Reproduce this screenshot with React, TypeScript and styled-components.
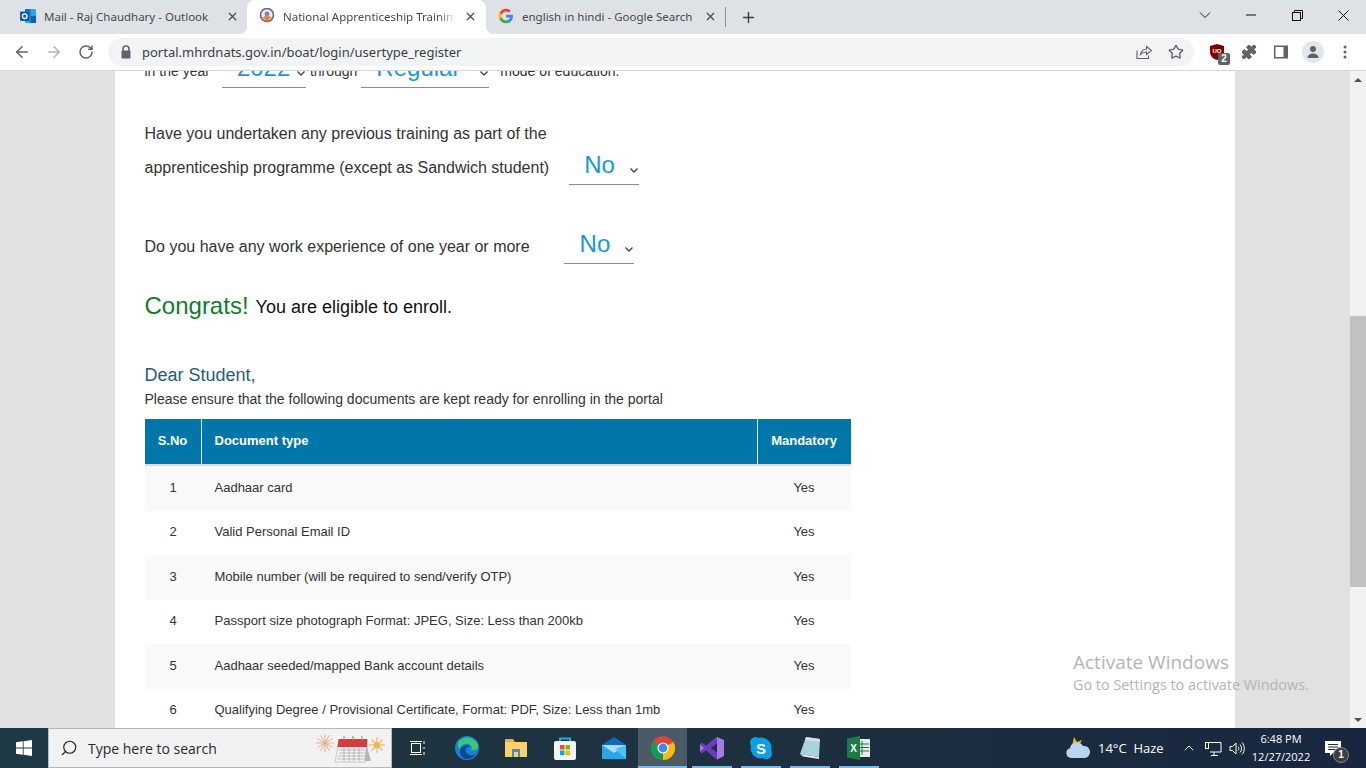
import React from "react";
import styled, { createGlobalStyle } from "styled-components";
import { ArrowLeft, ArrowRight, RotateCw, Star, Puzzle, X, Plus, ChevronDown, Search, ChevronUp } from "lucide-react";

const Global = createGlobalStyle`
  html, body { margin: 0; padding: 0; overflow: hidden; }
  * { box-sizing: border-box; }
  body { font-family: "Liberation Sans", Arial, sans-serif; }
`;
const Page = styled.div`width:1366px;height:768px;display:flex;flex-direction:column;overflow:hidden;position:relative;`;
const TabBar = styled.div`height:34px;background:#dee1e6;display:flex;align-items:flex-end;padding-left:8px;font-family:"Noto Sans","Open Sans",sans-serif;`;
const Tab = styled.div<{ $active?: boolean; $w: number; $pr: number }>`
  width:${p => p.$w}px;height:34px;display:flex;align-items:center;padding:0 ${p => p.$pr}px 2px 12px;gap:8px;font-size:11.5px;color:#3c4043;position:relative;
  background:${p => p.$active ? "#fff" : "transparent"};border-radius:8px 8px 0 0;
  ${p => p.$active ? `
    &::before,&::after{content:"";position:absolute;bottom:0;width:8px;height:8px;}
    &::before{left:-8px;background:radial-gradient(circle at 0 0,transparent 8px,#fff 8.5px);}
    &::after{right:-8px;background:radial-gradient(circle at 100% 0,transparent 8px,#fff 8.5px);}
  ` : ""}
`;
const TabTitle = styled.span<{ $fade?: boolean }>`
  flex:1;white-space:nowrap;overflow:hidden;color:#45494d;
  ${p => p.$fade ? "mask-image:linear-gradient(90deg,#000 90%,transparent 100%);" : ""}
`;
const TabClose = styled(X).attrs({ size: 13, strokeWidth: 2.2, color: "#45494d" })`flex:none;`;
const Sep = styled.div`width:1px;height:20px;background:#8b8e92;margin-bottom:7px;align-self:flex-end;`;
const NewTab = styled(Plus).attrs({ size: 17, strokeWidth: 2, color: "#3c4043" })`margin:0 0 8px 14px;`;
const WinControls = styled.div`margin-left:auto;display:flex;align-items:center;height:30px;align-self:flex-start;color:#222;`;
const WinBtn = styled.div`width:46px;height:30px;display:flex;align-items:center;justify-content:center;`;
const Toolbar = styled.div`height:37px;background:#fff;display:flex;align-items:center;padding:0 0 0 6px;border-bottom:1px solid #d6d6d6;`;
const NavBtn = styled.div`width:32px;height:28px;display:flex;align-items:center;justify-content:center;color:#5f6368;`;
const Omni = styled.div`margin-left:6px;width:1086px;height:28px;border-radius:14px;background:#f1f3f4;display:flex;align-items:center;padding:0 10px 0 12px;`;
const Url = styled.span`margin-left:10px;font:13px "Noto Sans","Open Sans",sans-serif;color:#3c4043;flex:1;`;
const ShareBox = styled.span`display:flex;margin-right:16px;`;
const ExtRow = styled.div`display:flex;align-items:center;margin-left:7px;color:#5f6368;`;
const ExtBtn = styled.div`width:32px;height:28px;display:flex;align-items:center;justify-content:center;position:relative;`;
const Avatar = styled.div`width:22px;height:22px;border-radius:50%;background:#e3e6ea;display:flex;align-items:center;justify-content:center;`;
const Badge = styled.span`position:absolute;right:3px;bottom:1px;width:12px;height:12px;background:#5f6368;border-radius:2px;color:#fff;font:bold 10px/12px "Liberation Sans",sans-serif;text-align:center;`;
const Viewport = styled.div`height:657px;background:#e1e1e1;display:flex;position:relative;overflow:hidden;`;
const PageArea = styled.div`width:1350px;padding-left:115px;overflow:hidden;`;
const Sheet = styled.div`width:1120px;height:657px;background:#fff;padding:0 0 0 29.5px;overflow:hidden;`;
const Scrollbar = styled.div`width:16px;background:#f1f1f1;display:flex;flex-direction:column;align-items:center;position:relative;`;
const ScrollArrow = styled.div<{ $down?: boolean }>`
  height:17px;width:16px;display:flex;align-items:center;justify-content:center;
  &::before{content:"";border-left:4px solid transparent;border-right:4px solid transparent;${p => p.$down ? "border-top:4px solid #505050;" : "border-bottom:4px solid #505050;"}}
`;
const ScrollTrack = styled.div`flex:1;width:16px;padding-top:228px;`;
const ScrollThumb = styled.div`height:271px;background:#c1c1c1;`;
const ClipRow = styled.div`display:flex;align-items:flex-end;color:#333;margin-top:-22px;height:39px;font-size:14px;`;
const Fade = styled.span<{ $ml?: number }>`margin-left:${p => p.$ml ?? 0}px;margin-bottom:9px;white-space:nowrap;`;
const Select = styled.div<{ $w: number; $ml: number; $pl: number; $lift?: number }>`
  flex:none;width:${p => p.$w}px;margin-left:${p => p.$ml}px;margin-bottom:${p => p.$lift ?? 0}px;height:39px;border-bottom:1px solid #8c8c8c;display:flex;align-items:center;position:relative;
  padding-left:${p => p.$pl}px;color:#1798d6;font-size:24px;white-space:nowrap;
`;
const Caret = styled.svg`position:absolute;right:0;bottom:9px;width:10px;height:10px;fill:none;stroke:#444;stroke-width:1.4;`;
const Question = styled.div<{ $mt: number }>`margin-top:${p => p.$mt}px;font-size:16px;line-height:34px;color:#333;`;
const QLine = styled.div`display:flex;height:34px;align-items:center;white-space:nowrap;`;
const Congrats = styled.div`margin-top:22px;height:40px;display:flex;align-items:center;gap:7px;white-space:nowrap;`;
const CongratsHead = styled.span`color:#107c2c;font-size:24px;`;
const CongratsText = styled.span`color:#111;font-size:18px;margin-top:3px;`;
const Dear = styled.div`margin-top:38px;font-size:18px;color:#1f5d75;height:22px;line-height:22px;`;
const Ensure = styled.div`margin-top:4px;font-size:14px;color:#333;height:19px;line-height:19px;`;
const TableBox = styled.div`margin-top:10px;width:706px;`;
const Grid = styled.div`display:grid;grid-template-columns:57px 556px 93px;`;
const HeadCell = styled.div<{ $c?: boolean; $b?: boolean }>`
  height:45px;padding-bottom:2px;background:#0077a8;color:#fff;font-weight:bold;font-size:13px;display:flex;align-items:center;
  justify-content:${p => p.$c ? "center" : "flex-start"};padding-left:${p => p.$c ? 0 : 13}px;
  border-right:${p => p.$b ? "1px solid #e8f2f6" : "none"};
`;
const HeadRule = styled.div`grid-column:1 / 4;height:2px;background:#ddd;`;
const Cell = styled.div<{ $alt: boolean; $c?: boolean }>`
  height:44.5px;padding-bottom:2px;background:${p => p.$alt ? "#f9f9f9" : "#fff"};color:#333;font-size:13px;display:flex;align-items:center;
  justify-content:${p => p.$c ? "center" : "flex-start"};padding-left:${p => p.$c ? 0 : 13}px;white-space:nowrap;
`;
const Taskbar = styled.div`height:40px;background:linear-gradient(90deg,#1f3a44 0%,#1e3240 45%,#18273f 100%);display:flex;align-items:center;color:#fff;position:relative;`;
const StartBtn = styled.div`width:48px;height:40px;display:flex;align-items:center;justify-content:center;`;
const SearchBox = styled.div`width:344px;height:40px;background:#f2f2f2;border:1px solid #b9b9b9;display:flex;align-items:center;padding-left:11px;color:#222;`;
const SearchGlyph = styled(Search).attrs({ size: 18, strokeWidth: 1.5 })`transform:scaleX(-1);`;
const SearchText = styled.span`margin-left:10px;font:14px "Open Sans","Noto Sans",sans-serif;color:#1f2a33;`;
const SearchArt = styled.div`margin-left:auto;margin-right:4px;display:flex;`;
const Apps = styled.div`display:flex;height:40px;margin-left:1px;`;
const AppBtn = styled.div<{ $active?: boolean; $open?: boolean }>`
  width:49px;height:40px;display:flex;align-items:center;justify-content:center;position:relative;
  background:${p => p.$active ? "#4a5a66" : "transparent"};
  &::after{content:"";display:${p => p.$open ? "block" : "none"};position:absolute;left:${p => p.$active ? 0 : 4.5}px;right:${p => p.$active ? 0 : 4.5}px;bottom:0;height:2px;background:#76b9ed;}
`;
const Tray = styled.div`margin-left:auto;padding-right:13px;display:flex;align-items:center;height:40px;font:13px "Open Sans","Noto Sans",sans-serif;color:#fff;`;
const Weather = styled.div`display:flex;align-items:center;width:108px;gap:7px;white-space:nowrap;`;
const TrayChevron = styled(ChevronUp).attrs({ size: 16, strokeWidth: 1.5 })`margin:0 8px;`;
const TrayGap = styled.span`width:7px;`;
const Clock = styled.div`width:62px;margin-left:4px;text-align:center;font-size:11px;line-height:18px;white-space:nowrap;`;
const Notif = styled.div`width:40px;height:40px;margin-left:1px;display:flex;align-items:center;justify-content:center;position:relative;`;
const NotifBadge = styled.span`position:absolute;left:20px;top:19px;width:16px;height:16px;border-radius:50%;background:#3a3f45;border:1px solid #888;color:#fff;font:bold 10px/14px "Liberation Sans",sans-serif;text-align:center;`;
const Watermark = styled.div`position:absolute;left:1073px;top:650px;color:#b4b4b4;font-family:"Open Sans","Noto Sans",sans-serif;pointer-events:none;`;
const WmTitle = styled.div`font-size:19px;line-height:24px;white-space:nowrap;`;
const WmSub = styled.div`font-size:14.4px;line-height:20px;margin-top:1px;white-space:nowrap;`;

const OutlookIcon = () => (
  <svg width="16" height="16" viewBox="0 0 16 16"><rect x="5" y="1" width="11" height="14" rx="1" fill="#28a8ea"/><rect x="5" y="1" width="5.5" height="7" fill="#0078d4"/><rect x="10.5" y="8" width="5.5" height="7" fill="#0364b8"/><rect x="0" y="3.5" width="9.5" height="9.5" rx="1" fill="#0f5ca8"/><circle cx="4.7" cy="8.2" r="2.3" fill="none" stroke="#fff" strokeWidth="1.3"/></svg>
);
const NatsIcon = () => (
  <svg width="16" height="16" viewBox="0 0 16 16"><circle cx="8" cy="7" r="6.5" fill="#eceaf2" stroke="#6b6390" strokeWidth="1.6"/><circle cx="8" cy="6" r="2.4" fill="#8b7f9c"/><path d="M3 9.5 L8 7.5 L13 9.5 L8 12 Z" fill="#e8803a"/><path d="M5.5 11.5 h5 v2.5 h-5z" fill="#d9662a"/></svg>
);
const GoogleIcon = () => (
  <svg width="16" height="16" viewBox="0 0 48 48"><path fill="#4285F4" d="M45 24.5c0-1.6-.1-3.1-.4-4.5H24v8.5h11.8c-.5 2.7-2 5-4.4 6.6v5.5h7.1C42.700 36.800 45 31.200 45 24.500z"/><path fill="#34A853" d="M24 46c5.900 0 10.900-2 14.500-5.300l-7.100-5.500c-2 1.300-4.500 2.100-7.400 2.100-5.700 0-10.500-3.800-12.200-9H4.500v5.700C8.100 41.100 15.500 46 24 46z"/><path fill="#FBBC05" d="M11.800 28.300c-.4-1.300-.7-2.800-.7-4.300s.3-3 .7-4.300V14H4.500C3 17 2 20.400 2 24s1 7 2.500 10l7.300-5.700z"/><path fill="#EA4335" d="M24 10.700c3.200 0 6.100 1.100 8.400 3.300l6.300-6.300C34.900 4.100 29.900 2 24 2 15.500 2 8.100 6.900 4.500 14l7.300 5.700c1.700-5.200 6.500-9 12.200-9z"/></svg>
);
const Chrome = ({ s = 24 }: { s?: number }) => (
  <svg width={s} height={s} viewBox="0 0 24 24"><circle cx="12" cy="12" r="12" fill="#db4437"/><path d="M12 12 L22.400 6 A12 12 0 0 1 12 24 Z" fill="#fbbc05"/><path d="M12 12 L12 24 A12 12 0 0 1 1.600 6 Z" fill="#0f9d58"/><circle cx="12" cy="12" r="5.600" fill="#fff"/><circle cx="12" cy="12" r="4.400" fill="#4285f4"/></svg>
);
const LockIcon = () => (
  <svg width="12" height="14" viewBox="0 0 12 14"><path d="M3 6V4a3 3 0 0 1 6 0v2" fill="none" stroke="#5f6368" strokeWidth="1.5"/><rect x="1.500" y="5.500" width="9" height="8" rx="1" fill="#5f6368"/></svg>
);
const ShareIcon = () => (
  <svg width="16" height="16" viewBox="0 0 16 16" fill="none" stroke="#5f6368" strokeWidth="1.1"><path d="M1 6.500V14.500H12.500V11.500"/><path d="M4.500 10.500C5 7 8 5 10.500 5V2.500L15.500 6.500 10.500 10.500V8C8 8 6 8.800 4.500 10.500Z"/></svg>
);
const UBlock = () => (
  <svg width="16" height="18" viewBox="0 0 16 18"><path d="M8 1 L15 3 V9 C15 13 12 16 8 17 C4 16 1 13 1 9 V3 Z" fill="#800000"/><text x="8" y="9.5" fontSize="6" fontWeight="bold" fill="#fff" textAnchor="middle" fontFamily="Liberation Sans">UO</text></svg>
);
const SidePanelIcon = () => (
  <svg width="16" height="16" viewBox="0 0 16 16"><path fill="#5f6368" d="M1 1.500h14v13H1z"/><path fill="#fff" d="M2.500 3H10.500v10H2.500z"/></svg>
);
const ProfileIcon = () => (
  <svg width="16" height="16" viewBox="0 0 16 16" fill="#5f6368"><circle cx="8" cy="5" r="3"/><path d="M2.500 14c0-3 2.500-4.500 5.500-4.500s5.500 1.500 5.500 4.500z"/></svg>
);
const Dots = () => (
  <svg width="16" height="16" viewBox="0 0 16 16" fill="#5f6368"><circle cx="8" cy="3" r="1.500"/><circle cx="8" cy="8" r="1.500"/><circle cx="8" cy="13" r="1.500"/></svg>
);
const ChevronWin = () => (
  <svg width="12" height="8" viewBox="0 0 12 8" fill="none" stroke="#222"><path d="M1 1.500 6 6.500 11 1.500"/></svg>
);
const MinIcon = () => (
  <svg width="10" height="2" viewBox="0 0 10 2"><rect y="0.500" width="10" height="1" fill="#111"/></svg>
);
const RestoreIcon = () => (
  <svg width="11" height="11" viewBox="0 0 11 11" fill="none" stroke="#111"><rect x="0.500" y="2.500" width="8" height="8"/><path d="M2.500 2.500V0.500H10.500V8.500H8.500"/></svg>
);
const CloseWin = () => (
  <svg width="11" height="11" viewBox="0 0 11 11" fill="none" stroke="#111"><path d="M0.500 0.500 10.500 10.500M10.500 0.500 0.500 10.500"/></svg>
);
const WinLogo = () => (
  <svg width="16" height="16" viewBox="0 0 16 16" fill="#fff"><path d="M0 2.300 6.800 1.300V7.600H0zM7.600 1.200 16 0V7.600H7.600zM0 8.400H6.800V14.700L0 13.700zM7.600 8.400H16V16L7.600 14.800z"/></svg>
);
const CalendarArt = () => (
  <svg width="72" height="30" viewBox="0 0 72 30">
    <g stroke="#f0a080" strokeWidth="0.800">{[0,30,60,90,120,150].map(a => <line key={a} x1="10" y1="1" x2="10" y2="19" transform={`rotate(${a} 10 10)`}/>)}</g>
    <g stroke="#f4a93a" strokeWidth="1">{[0,45,90,135].map(a => <line key={a} x1="62" y1="4" x2="62" y2="20" transform={`rotate(${a} 62 12)`}/>)}</g>
    <circle cx="62" cy="12" r="3" fill="#f6b73c"/>
    <path d="M50 6 L56 28 H46 Z" fill="#b4b4c0"/>
    <path d="M24 8H52L50 29H20Z" fill="#f4f4f4" stroke="#999" strokeWidth="0.500"/>
    <path d="M23.500 6H52.500L51.800 14H22.500Z" fill="#d83b3b"/>
    <g stroke="#888" strokeWidth="1" fill="none"><path d="M29 8V3"/><path d="M38 8V3"/><path d="M47 8V3"/></g>
    <g stroke="#999" strokeWidth="0.600"><path d="M24 17H50M24 20H50M23 23H50M22 26H50M29 15V28M34 15V28M39 15V28M44 15V28"/></g>
  </svg>
);
const TaskView = () => (
  <svg width="16" height="16" viewBox="0 0 16 16" fill="none" stroke="#fff"><rect x="1.500" y="3.500" width="9" height="9"/><path d="M0 1.500H12M0 14.500H12M14 1v3M14 7v2M14 12v3"/></svg>
);
const EdgeIcon = () => (
  <svg width="24" height="24" viewBox="0 0 24 24"><circle cx="12" cy="12" r="12" fill="#1b7fd6"/><path d="M3 7C6 0 19 -1 23 9c1 4-3 6-7 5 2-4-2-7-6-6-3 .8-5 3-5.500 5C3.500 12 2.500 9 3 7z" fill="#37c87a"/><path d="M5 16c0-6 7-9 11-5-3-1-6 1-5.500 4 .5 4 6 5 10 3-3 5-9 6-12 4-2-1.500-3.500-3.500-3.500-6z" fill="#0c4a8f"/></svg>
);
const FolderIcon = () => (
  <svg width="22" height="20" viewBox="0 0 22 20"><path d="M0 1h8l2 3h12v15H0z" fill="#e8b23c"/><rect y="4" width="22" height="15" fill="#f9d26b"/><rect x="7" y="11" width="8" height="8" fill="#3f8fd8"/><rect x="9" y="14" width="4" height="5" fill="#f9d26b"/></svg>
);
const StoreIcon = () => (
  <svg width="24" height="24" viewBox="0 0 24 24"><path d="M7 5V2.500h10V5" fill="none" stroke="#29a8e0" strokeWidth="2"/><rect x="1" y="5" width="22" height="19" rx="2" fill="#f4f4f4"/><rect x="7" y="9" width="4.500" height="4.500" fill="#f25022"/><rect x="12.500" y="9" width="4.500" height="4.500" fill="#7fba00"/><rect x="7" y="14.500" width="4.500" height="4.500" fill="#00a4ef"/><rect x="12.500" y="14.500" width="4.500" height="4.500" fill="#ffb900"/></svg>
);
const MailIcon = () => (
  <svg width="24" height="24" viewBox="0 0 24 24"><path d="M0 9 12 1l12 8v14H0z" fill="#0f6cbd"/><path d="M0 9h24v14H0z" fill="#27a6e8"/><path d="M0 9l12 8 12-8v0H0z" fill="#a6e2fa"/><path d="M24 23 13 13l11-4z" fill="#4cc2f1"/></svg>
);
const VSIcon = () => (
  <svg width="24" height="24" viewBox="0 0 24 24"><path d="M17 1 24 4v16l-7 3.500L6 14l-4 3-2-1.500v-7L2 7l4 3z" fill="#a57de0"/><path d="M17 1v22.500L6 14l-4 3-2-1.500L4 12 0 8.500 2 7l4 3z" fill="#6b3bbf"/><path d="M17 7.500 11 12l6 4.500z" fill="#1c2f3f"/></svg>
);
const SkypeIcon = () => (
  <svg width="24" height="24" viewBox="0 0 24 24"><circle cx="12" cy="12" r="10.500" fill="#0aa0e6"/><circle cx="6.500" cy="6.500" r="5.500" fill="#0aa0e6"/><circle cx="17.500" cy="17.500" r="5.500" fill="#0aa0e6"/><text x="12" y="17.500" fontSize="15" fontWeight="bold" fill="#fff" textAnchor="middle" fontFamily="Liberation Sans">S</text></svg>
);
const NotepadIcon = () => (
  <svg width="24" height="24" viewBox="0 0 24 24"><path d="M8 1 22 3 21 21 2 18z" fill="#a9d3da"/><path d="M21 21 2 18l3 2.500 16 2.500z" fill="#e8e8e8"/><path d="M8 1 22 3 21.500 6 7 4z" fill="#dcdcdc"/></svg>
);
const ExcelIcon = () => (
  <svg width="24" height="24" viewBox="0 0 24 24"><rect x="8" y="3" width="15" height="18" fill="#fff" opacity=".9"/><path d="M15 5v14M9 8h13M9 11.500h13M9 15h13" stroke="#1c7a45" strokeWidth="1"/><path d="M0 2.500 13 0v24L0 21.500z" fill="#1c7a45"/><text x="6.500" y="16" fontSize="10" fontWeight="bold" fill="#fff" textAnchor="middle" fontFamily="Liberation Sans">X</text></svg>
);
const WeatherIcon = () => (
  <svg width="26" height="24" viewBox="0 0 26 24"><path d="M7 10 9 1 12 6 17 4 14 10z" fill="#f2b133"/><path d="M6 22a5 5 0 0 1-1-9.800A7 7 0 0 1 18 10a5.500 5.500 0 0 1 2 12z" fill="#b9d4ef"/></svg>
);
const NetworkIcon = () => (
  <svg width="17" height="15" viewBox="0 0 17 15" fill="none" stroke="#fff"><path d="M3.500 1.500H16V11H5M9 11v3M6 14.500h7"/><rect x="0.500" y="1.500" width="3" height="6"/></svg>
);
const SpeakerIcon = () => (
  <svg width="17" height="15" viewBox="0 0 17 15" fill="none" stroke="#fff"><path d="M1 5.500H3.500L7 2V13L3.500 9.500H1z"/><path d="M9 5.500c1 1 1 3 0 4M11 3.500c2 2 2 6 0 8M13 1.500c3 3 3 9 0 12"/></svg>
);
const BubbleIcon = () => (
  <svg width="16" height="15" viewBox="0 0 16 15"><path d="M0 0H16V12H8L5 15V12H0z" fill="#fff"/><path d="M3 3.500H13M3 6H13M3 8.500H10" stroke="#1c2f3f"/></svg>
);
const SmallCaret = () => (
  <Caret viewBox="0 0 10 10"><path d="M1.500 3.500 5 7 8.500 3.500" /></Caret>
);

const docs = [
  "Aadhaar card",
  "Valid Personal Email ID",
  "Mobile number (will be required to send/verify OTP)",
  "Passport size photograph Format: JPEG, Size: Less than 200kb",
  "Aadhaar seeded/mapped Bank account details",
  "Qualifying Degree / Provisional Certificate, Format: PDF, Size: Less than 1mb",
];

export default function App() {
  return (
    <Page>
      <Global />
      <TabBar>
        <Tab $w={239} $pr={8.5}><OutlookIcon /><TabTitle>Mail - Raj Chaudhary - Outlook</TabTitle><TabClose /></Tab>
        <Tab $w={239} $pr={9} $active><NatsIcon /><TabTitle $fade>National Apprenticeship Training</TabTitle><TabClose /></Tab>
        <Tab $w={239} $pr={8.5}><GoogleIcon /><TabTitle>english in hindi - Google Search</TabTitle><TabClose /></Tab>
        <Sep />
        <NewTab />
        <WinControls>
          <WinBtn><ChevronWin /></WinBtn>
          <WinBtn><MinIcon /></WinBtn>
          <WinBtn><RestoreIcon /></WinBtn>
          <WinBtn><CloseWin /></WinBtn>
        </WinControls>
      </TabBar>
      <Toolbar>
        <NavBtn><ArrowLeft size={18} strokeWidth={2} /></NavBtn>
        <NavBtn><ArrowRight size={18} strokeWidth={2} color="#b0b3b7" /></NavBtn>
        <NavBtn><RotateCw size={16} strokeWidth={2.2} /></NavBtn>
        <Omni>
          <LockIcon />
          <Url>portal.mhrdnats.gov.in/boat/login/usertype_register</Url>
          <ShareBox><ShareIcon /></ShareBox>
          <Star size={16} strokeWidth={2} color="#5f6368" />
        </Omni>
        <ExtRow>
          <ExtBtn><UBlock /><Badge>2</Badge></ExtBtn>
          <ExtBtn><Puzzle size={16} fill="#5f6368" strokeWidth={1.5} /></ExtBtn>
          <ExtBtn><SidePanelIcon /></ExtBtn>
          <ExtBtn><Avatar><ProfileIcon /></Avatar></ExtBtn>
          <ExtBtn><Dots /></ExtBtn>
        </ExtRow>
      </Toolbar>
      <Viewport>
        <PageArea>
          <Sheet>
            <ClipRow>
              <Fade>in the year</Fade>
              <Select $w={84} $ml={12} $pl={15}>2022<SmallCaret /></Select>
              <Fade $ml={4}>through</Fade>
              <Select $w={128} $ml={4} $pl={15}>Regular<SmallCaret /></Select>
              <Fade $ml={11}>mode of education.</Fade>
            </ClipRow>
            <Question $mt={29}>
              <QLine>Have you undertaken any previous training as part of the</QLine>
              <QLine>apprenticeship programme (except as Sandwich student)
                <Select $w={70} $ml={20} $pl={15} $lift={6}>No<SmallCaret /></Select>
              </QLine>
            </Question>
            <Question $mt={45}>
              <QLine>Do you have any work experience of one year or more
                <Select $w={70} $ml={34} $pl={16} $lift={6}>No<SmallCaret /></Select>
              </QLine>
            </Question>
            <Congrats>
              <CongratsHead>Congrats!</CongratsHead>
              <CongratsText>You are eligible to enroll.</CongratsText>
            </Congrats>
            <Dear>Dear Student,</Dear>
            <Ensure>Please ensure that the following documents are kept ready for enrolling in the portal</Ensure>
            <TableBox>
              <Grid>
                <HeadCell $c $b>S.No</HeadCell>
                <HeadCell $b>Document type</HeadCell>
                <HeadCell $c>Mandatory</HeadCell>
                <HeadRule />
                {docs.map((d, i) => (
                  <React.Fragment key={d}>
                    <Cell $alt={i % 2 === 0} $c>{i + 1}</Cell>
                    <Cell $alt={i % 2 === 0}>{d}</Cell>
                    <Cell $alt={i % 2 === 0} $c>Yes</Cell>
                  </React.Fragment>
                ))}
              </Grid>
            </TableBox>
          </Sheet>
        </PageArea>
        <Scrollbar>
          <ScrollArrow />
          <ScrollTrack><ScrollThumb /></ScrollTrack>
          <ScrollArrow $down />
        </Scrollbar>
      </Viewport>
      <Taskbar>
        <StartBtn><WinLogo /></StartBtn>
        <SearchBox>
          <SearchGlyph />
          <SearchText>Type here to search</SearchText>
          <SearchArt><CalendarArt /></SearchArt>
        </SearchBox>
        <Apps>
          <AppBtn><TaskView /></AppBtn>
          <AppBtn><EdgeIcon /></AppBtn>
          <AppBtn><FolderIcon /></AppBtn>
          <AppBtn><StoreIcon /></AppBtn>
          <AppBtn><MailIcon /></AppBtn>
          <AppBtn $active $open><Chrome /></AppBtn>
          <AppBtn $open><VSIcon /></AppBtn>
          <AppBtn $open><SkypeIcon /></AppBtn>
          <AppBtn $open><NotepadIcon /></AppBtn>
          <AppBtn $open><ExcelIcon /></AppBtn>
        </Apps>
        <Tray>
          <Weather><WeatherIcon /><span>14°C&nbsp;&nbsp;Haze</span></Weather>
          <TrayChevron />
          <NetworkIcon />
          <TrayGap />
          <SpeakerIcon />
          <Clock>6:48 PM<br />12/27/2022</Clock>
          <Notif><BubbleIcon /><NotifBadge>1</NotifBadge></Notif>
        </Tray>
      </Taskbar>
      <Watermark>
        <WmTitle>Activate Windows</WmTitle>
        <WmSub>Go to Settings to activate Windows.</WmSub>
      </Watermark>
    </Page>
  );
}
